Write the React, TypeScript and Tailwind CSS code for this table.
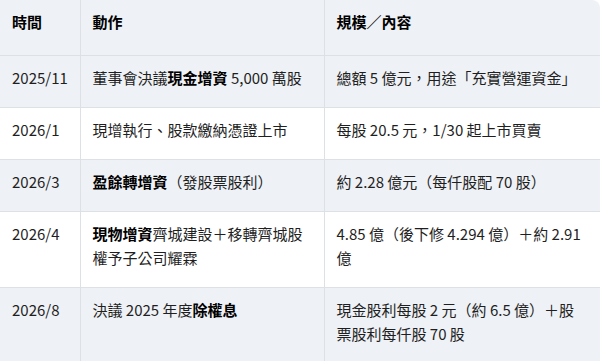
import React from "react";

const rows: { t: string; a: React.ReactNode; c: React.ReactNode; gray: boolean }[] = [
  {
    t: "2025/11",
    a: (
      <>
        董事會決議<b className="font-bold text-black">現金增資</b> 5,000 萬股
      </>
    ),
    c: "總額 5 億元，用途「充實營運資金」",
    gray: true,
  },
  {
    t: "2026/1",
    a: "現增執行、股款繳納憑證上市",
    c: "每股 20.5 元，1/30 起上市買賣",
    gray: false,
  },
  {
    t: "2026/3",
    a: (
      <>
        <b className="font-bold text-black">盈餘轉增資</b>（發股票股利）
      </>
    ),
    c: "約 2.28 億元（每仟股配 70 股）",
    gray: true,
  },
  {
    t: "2026/4",
    a: (
      <>
        <b className="font-bold text-black">現物增資</b>齊城建設＋移轉齊城股權予子公司耀霖
      </>
    ),
    c: "4.85 億（後下修 4.294 億）＋約 2.91 億",
    gray: false,
  },
  {
    t: "2026/8",
    a: (
      <>
        決議 2025 年度<b className="font-bold text-black">除權息</b>
      </>
    ),
    c: "現金股利每股 2 元（約 6.5 億）＋股票股利每仟股 70 股",
    gray: true,
  },
];

export default function App() {
  return (
    <div
      className="w-[600px] h-[361px] overflow-hidden bg-white text-[15px] leading-[24px] text-[#1f1f1f]"
      style={{ fontFamily: '"Noto Sans CJK TC", "Noto Sans", sans-serif' }}
    >
      <div className="rounded-tr-lg overflow-hidden">
        <table className="w-full table-fixed border-collapse">
          <colgroup>
            <col className="w-[80px]" />
            <col className="w-[244px]" />
            <col />
          </colgroup>
          <thead>
            <tr className="bg-[#eef1f5]">
              <th className="text-left font-bold text-black pl-3 pr-3 pt-[10px] pb-[21px] border-r border-[#dde1e6] align-top">
                時間
              </th>
              <th className="text-left font-bold text-black pl-3 pr-4 pt-[10px] pb-[21px] border-r border-[#dde1e6] align-top">
                動作
              </th>
              <th className="text-left font-bold text-black pl-3 pr-3 pt-[10px] pb-[21px] align-top">
                規模／內容
              </th>
            </tr>
          </thead>
          <tbody>
            {rows.map((r, i) => (
              <tr
                key={i}
                className={`border-t border-[#dde1e6] ${r.gray ? "bg-[#eef1f5]" : "bg-white"}`}
              >
                <td className="pl-3 pr-2 pt-[10px] pb-[17px] border-r border-[#dde1e6] align-top">
                  {r.t}
                </td>
                <td className="pl-3 pr-4 pt-[10px] pb-[17px] border-r border-[#dde1e6] align-top">
                  {r.a}
                </td>
                <td className="pl-3 pr-3 pt-[10px] pb-[17px] align-top">{r.c}</td>
              </tr>
            ))}
          </tbody>
        </table>
      </div>
    </div>
  );
}
